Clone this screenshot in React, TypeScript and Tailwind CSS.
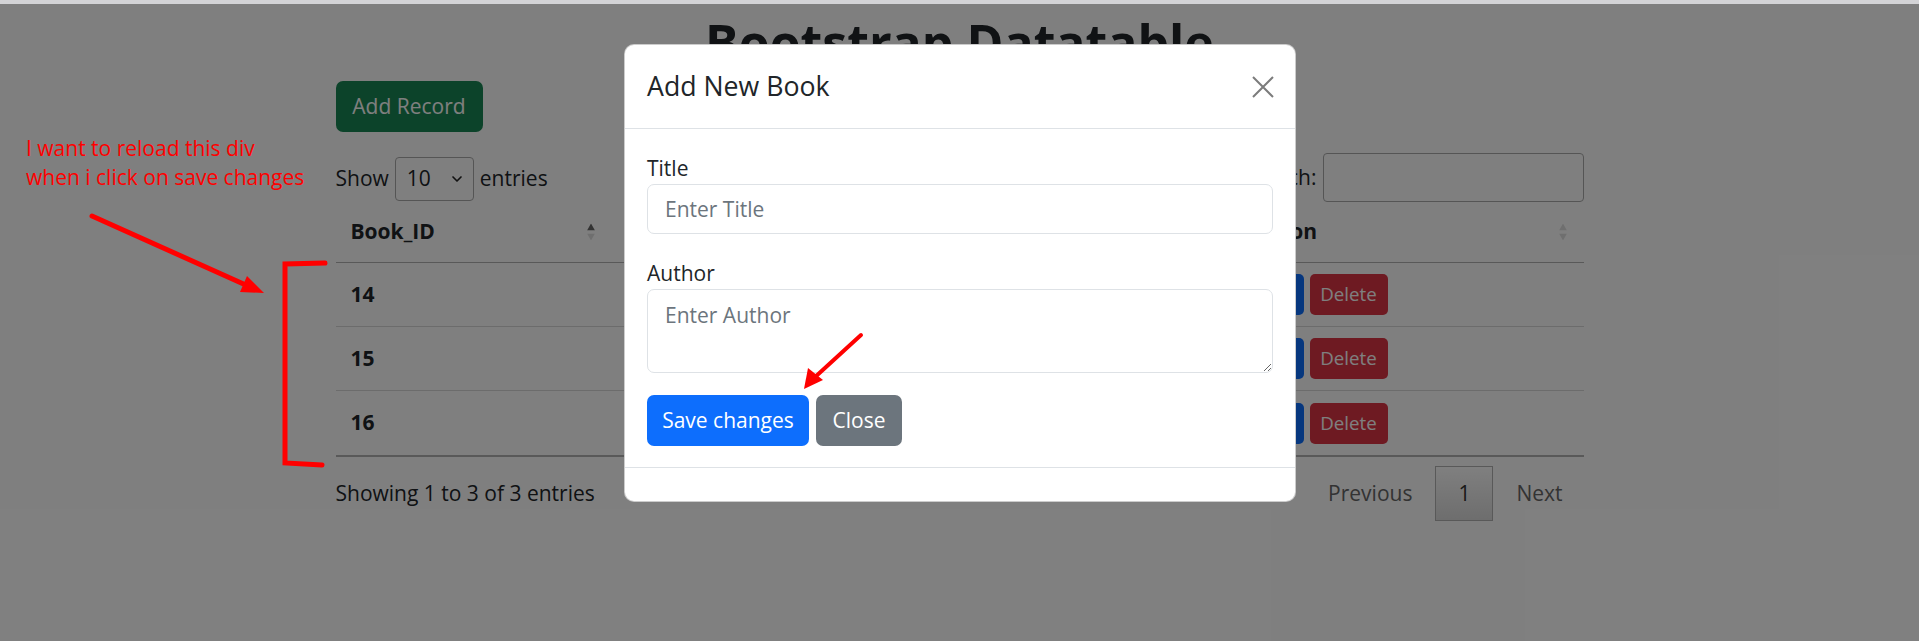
import { ChevronDown } from "lucide-react"

const font = "font-['Open_Sans',sans-serif]"

type Row = { id: number }

const rows: Row[] = [{ id: 14 }, { id: 15 }, { id: 16 }]

function SortIcon({ active }: { active?: boolean }) {
  return (
    <span className="absolute right-[17px] top-1/2 -translate-y-1/2 flex flex-col items-center gap-[3px]">
      <svg width="8" height="7" viewBox="0 0 8 7">
        <path d="M4 0 L8 7 L0 7 Z" fill={active ? "#666666" : "#dfdfdf"} />
      </svg>
      <svg width="8" height="7" viewBox="0 0 8 7">
        <path d="M0 0 L8 0 L4 7 Z" fill="#dfdfdf" />
      </svg>
    </span>
  )
}

// title + author columns sit behind the modal, so their cells stay empty
function DataTablePage() {
  return (
    <div className="flex flex-col items-center">
      <h1 className="mt-[8px] text-[50px] font-bold leading-[60px] text-[#212529]">Bootstrap Datatable</h1>

      <div className="mt-[9px] w-[1248px]">
        <button className="h-[51px] w-[147px] rounded-[7px] bg-[#198754] text-[21px] text-white">Add Record</button>

        {/* length + search */}
        <div className="mt-[21px] flex h-[49px] items-start justify-between text-[21px]">
          <div className="mt-[4px] flex h-[44px] items-center gap-[6px]">
            <span>Show</span>
            <div className="flex h-[44px] w-[79px] items-center justify-between rounded-[4px] border border-[#aaaaaa] pl-[11px] pr-[8px]">
              <span>10</span>
              <ChevronDown size={16} strokeWidth={2.5} className="text-[#222]" />
            </div>
            <span>entries</span>
          </div>
          <div className="flex items-center gap-[6px]">
            <span>Search:</span>
            <div className="h-[49px] w-[261px] rounded-[4px] border border-[#aaaaaa]" />
          </div>
        </div>

        {/* table */}
        <div className="border-b-2 border-[#b3b3b3]">
          <div className="grid h-[61px] grid-cols-[276px_310px_313px_1fr] border-b border-[#b3b3b3] text-[21px] font-bold">
            <div className="relative flex items-center pl-[15px]">
              Book_ID
              <SortIcon active />
            </div>
            <div className="relative" />
            <div className="relative" />
            <div className="relative flex items-center pl-[15px]">
              Action
              <SortIcon />
            </div>
          </div>
          {rows.map((r, i) => (
            <div
              key={r.id}
              className={`grid h-[64px] grid-cols-[276px_310px_313px_1fr] text-[21px] ${i < rows.length - 1 ? "border-b border-[#d9d9d9]" : ""}`}
            >
              <div className="flex items-center pl-[15px] font-bold">{r.id}</div>
              <div />
              <div />
              <div className="flex items-center gap-[6px] pl-[15px]">
                <button className="h-[41px] w-[54px] rounded-[5px] bg-[#0d6efd] text-[18.7px] text-white">Edit</button>
                <button className="h-[41px] w-[78px] rounded-[5px] bg-[#dc3545] text-[18.7px] text-white">Delete</button>
              </div>
            </div>
          ))}
        </div>

        {/* info + pagination */}
        <div className="mt-[9px] flex items-center justify-between text-[21px]">
          <span>Showing 1 to 3 of 3 entries</span>
          <div className="flex items-center">
            <span className="px-[21px] text-[#666666]">Previous</span>
            <span className="ml-[2px] flex h-[55px] w-[58px] items-center justify-center border border-[#b3b3b3] bg-gradient-to-b from-white to-[#dcdcdc] text-[#333333]">
              1
            </span>
            <span className="ml-[2px] px-[21px] text-[#666666]">Next</span>
          </div>
        </div>
      </div>
    </div>
  )
}

function AddBookModal() {
  return (
    <div className="absolute left-[624px] top-[40px] w-[672px] rounded-[10px] border border-black/20 bg-white text-[#212529]">
      <div className="flex h-[84px] items-center justify-between border-b border-[#dee2e6] pl-[22px] pr-[21px]">
        <h5 className="text-[26.7px] font-medium">Add New Book</h5>
        <svg width="22" height="22" viewBox="0 0 22 22">
          <path d="M1 1 L21 21 M21 1 L1 21" stroke="#7c7c7c" strokeWidth="2" />
        </svg>
      </div>

      <div className="px-[22px] pb-[21px] pt-[23px] text-[21px]">
        <label className="block leading-[32px]">Title</label>
        <input
          className="block h-[50px] w-full rounded-[7px] border border-[#dee2e6] pl-[17px] text-[21px] outline-none placeholder:text-[#6c757d]"
          placeholder="Enter Title"
        />
        <label className="mt-[23px] block leading-[32px]">Author</label>
        <textarea
          className="block h-[84px] w-full rounded-[7px] border border-[#dee2e6] py-[9px] pl-[17px] text-[21px] leading-[32px] outline-none placeholder:text-[#6c757d]"
          placeholder="Enter Author"
        />
        <div className="mt-[22px] flex gap-[7px]">
          <button className="h-[51px] w-[162px] rounded-[7px] bg-[#0d6efd] text-[21px] text-white">Save changes</button>
          <button className="h-[51px] w-[86px] rounded-[7px] bg-[#6c757d] text-[21px] text-white">Close</button>
        </div>
      </div>

      <div className="h-[34px] border-t border-[#dee2e6]" />
    </div>
  )
}

function Annotations() {
  return (
    <>
      <div className="absolute left-[26px] top-[134px] text-[21px] leading-[29px] text-[#ff0000]">
        <div>I want to reload this div</div>
        <div>when i click on save changes</div>
      </div>
      <svg className="absolute left-0 top-0" width="1919" height="641" viewBox="0 0 1919 641">
        {/* arrow to the table rows */}
        <path d="M92 216 L248 286" stroke="#ff0000" strokeWidth="5" strokeLinecap="round" />
        <path d="M264 293 L240 292 L247 276 Z" fill="#ff0000" />
        {/* bracket */}
        <path d="M325 263 L285 264 L285 463 L322 465" stroke="#ff0000" strokeWidth="5" fill="none" strokeLinecap="round" />
        {/* arrow to save button */}
        <path d="M861 335 L814 378" stroke="#ff0000" strokeWidth="4" strokeLinecap="round" />
        <path d="M804 389 L808 368 L823 380 Z" fill="#ff0000" />
      </svg>
    </>
  )
}

export default function App() {
  return (
    <div className={`relative flex h-[641px] w-full flex-col overflow-hidden bg-white text-[#212529] ${font}`}>
      <div className="h-[4px] shrink-0 bg-[#d3d3d6]" />
      <div className="relative flex-1">
        <DataTablePage />
        <div className="absolute inset-0 bg-black/50" />
        <AddBookModal />
      </div>
      <Annotations />
    </div>
  )
}
